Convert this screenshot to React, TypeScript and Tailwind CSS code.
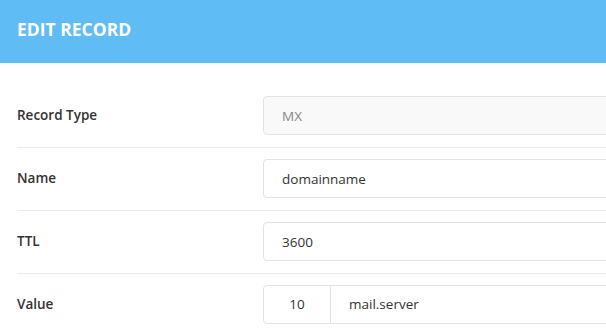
const rowClass = "flex items-center border-b border-[#ebebeb] pt-[11px] pb-[12px]";
const labelClass = "w-[246px] shrink-0 text-[13.5px] font-semibold text-[#333]";
const inputClass =
  "h-[39px] w-[420px] shrink-0 rounded-[4px] border border-[#e3e3e3] px-[18px] text-[13.5px] text-[#333] outline-none";

export default function App() {
  return (
    <div className="h-[336px] w-full overflow-hidden bg-white font-['Open_Sans',sans-serif]">
      <div className="flex h-[63px] items-center bg-[#5fbcf5] px-[17px] pb-[4px]">
        <h1 className="text-[17.5px] font-bold text-white">EDIT RECORD</h1>
      </div>

      <div className="pl-[17px] pt-[22px]">
        <div className={rowClass}>
          <label className={labelClass}>Record Type</label>
          <input className={`${inputClass} bg-[#f9f9f9] text-[#888]`} value="MX" disabled readOnly />
        </div>

        <div className={rowClass}>
          <label className={labelClass}>Name</label>
          <input className={inputClass} value="domainname" readOnly />
        </div>

        <div className={rowClass}>
          <label className={labelClass}>TTL</label>
          <input className={inputClass} value="3600" readOnly />
        </div>

        <div className={rowClass}>
          <label className={labelClass}>Value</label>
          <div className="flex h-[39px] w-[420px] shrink-0 overflow-hidden rounded-[4px] border border-[#e3e3e3]">
            <input
              className="w-[67px] shrink-0 border-r border-[#e3e3e3] text-center text-[13.5px] text-[#333] outline-none"
              value="10"
              readOnly
            />
            <input className="min-w-0 flex-1 px-[18px] text-[13.5px] text-[#333] outline-none" value="mail.server" readOnly />
          </div>
        </div>
      </div>
    </div>
  );
}
